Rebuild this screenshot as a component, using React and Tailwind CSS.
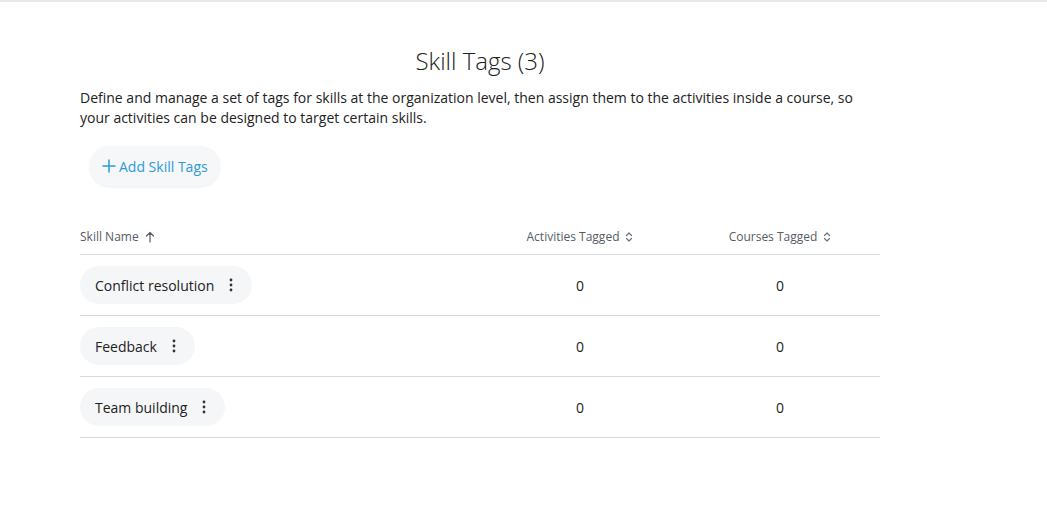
import React from "react";

const rows = ["Conflict resolution", "Feedback", "Team building"];

function Chevrons() {
  return (
    <svg width="8" height="12" viewBox="0 0 8 12" fill="none" stroke="#6b7280" strokeWidth="1.2" strokeLinecap="round" strokeLinejoin="round">
      <path d="M1.5 4.5 L4 2 L6.5 4.5" />
      <path d="M1.5 7.5 L4 10 L6.5 7.5" />
    </svg>
  );
}

function Kebab() {
  return (
    <svg width="4" height="16" viewBox="0 0 4 16" fill="#333">
      <circle cx="2" cy="3" r="1.4" />
      <circle cx="2" cy="8" r="1.4" />
      <circle cx="2" cy="13" r="1.4" />
    </svg>
  );
}

export default function App() {
  return (
    <div className="min-h-[530px] bg-white" style={{ fontFamily: '"Open Sans", sans-serif' }}>
      <div className="border-t-2 border-[#e5e7eb]" />
      <div className="w-[800px] ml-[80px] pt-[43px]">
        <h1 className="text-center text-[24px] leading-[32px] font-light text-[#222]">Skill Tags (3)</h1>
        <p className="mt-[11px] text-[14px] leading-[20px] text-[#222] pr-[20px]">
          Define and manage a set of tags for skills at the organization level, then assign them to the activities inside a course, so your activities can be designed to target certain skills.
        </p>
        <button className="mt-[18px] ml-[10px] h-[40px] px-[12px] rounded-full bg-[#f6f7f9] shadow-[0_1px_3px_rgba(0,0,0,0.08)] flex items-center gap-[3px] text-[14px] text-[#2b9cd8]">
          <svg width="14" height="14" viewBox="0 0 14 14" stroke="#2b9cd8" strokeWidth="1.5" strokeLinecap="round">
            <path d="M7 1 V13 M1 7 H13" />
          </svg>
          <span>Add Skill Tags</span>
        </button>
        <div className="mt-[36px]">
          <div className="grid grid-cols-[400px_200px_200px] h-[33px] items-end pb-[9px] border-b border-[#d5dae1] text-[12px] leading-[16px] text-[#555c66]">
            <div className="flex items-center gap-[6px]">
              <span>Skill Name</span>
              <svg width="10" height="12" viewBox="0 0 10 12" fill="none" stroke="#555c66" strokeWidth="1.2" strokeLinecap="round" strokeLinejoin="round">
                <path d="M5 11 V1.5 M1.5 5 L5 1.5 L8.5 5" />
              </svg>
            </div>
            <div className="flex items-center justify-center gap-[6px]">
              <span>Activities Tagged</span>
              <Chevrons />
            </div>
            <div className="flex items-center justify-center gap-[6px]">
              <span>Courses Tagged</span>
              <Chevrons />
            </div>
          </div>
          {rows.map((r) => (
            <div key={r} className="grid grid-cols-[400px_200px_200px] h-[61px] items-center border-b border-[#d5dae1] text-[14px] text-[#222]">
              <div>
                <div className="inline-flex items-center h-[38px] pl-[15px] pr-[19px] rounded-full bg-[#f5f6f8] gap-[15px]">
                  <span>{r}</span>
                  <Kebab />
                </div>
              </div>
              <div className="text-center">0</div>
              <div className="text-center">0</div>
            </div>
          ))}
        </div>
      </div>
    </div>
  );
}
